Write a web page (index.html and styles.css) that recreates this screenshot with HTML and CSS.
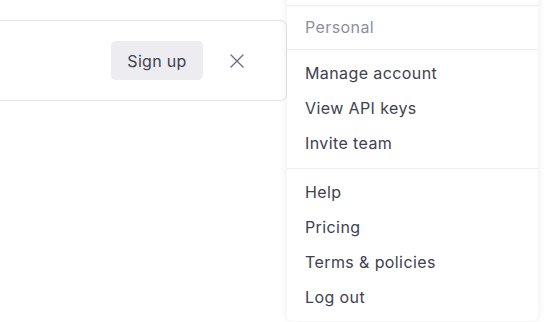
FILE: index.html
```html
<!DOCTYPE html>
<html>
<head>
    <title>Account menu</title>
    <link rel="stylesheet" href="styles.css">
</head>
<body>
    <div class="page">
        <div class="banner">
            <button class="signup-btn">Sign up</button>
            <button class="close-btn" aria-label="Close">
                <svg width="16" height="16" viewBox="0 0 16 16" fill="none" stroke="currentColor" stroke-width="1.4" stroke-linecap="round">
                    <path d="M2 2L14 14M14 2L2 14"/>
                </svg>
            </button>
        </div>

        <div class="menu">
            <div class="menu-section menu-top"></div>
            <div class="menu-section menu-label">Personal</div>
            <div class="menu-section menu-account">
                <a href="#" class="menu-item">Manage account</a>
                <a href="#" class="menu-item">View API keys</a>
                <a href="#" class="menu-item">Invite team</a>
            </div>
            <div class="menu-section">
                <a href="#" class="menu-item">Help</a>
                <a href="#" class="menu-item">Pricing</a>
                <a href="#" class="menu-item">Terms &amp; policies</a>
                <a href="#" class="menu-item">Log out</a>
            </div>
        </div>
    </div>
</body>
</html>
```

FILE: styles.css
```css
body {
    margin: 0;
    padding: 0;
    background-color: #fff;
    font-family: Inter, "Noto Sans", sans-serif;
    color: #40414f;
    overflow: hidden;
}
.page {
    display: flex;
    align-items: flex-start;
    height: 322px;
}
.banner {
    margin-top: 20px;
    margin-left: -20px;
    width: 305px;
    height: 79px;
    border: 1px solid #e5e5e5;
    border-radius: 6px;
    display: flex;
    align-items: center;
    justify-content: flex-end;
    flex-shrink: 0;
}
.signup-btn {
    background-color: #ececf1;
    border: none;
    border-radius: 5px;
    height: 39px;
    width: 92px;
    font-family: inherit;
    font-size: 16px;
    letter-spacing: 0.3px;
    color: #40414f;
    cursor: pointer;
    margin-right: 26px;
}
.close-btn {
    background: none;
    border: none;
    padding: 0;
    width: 16px;
    height: 16px;
    color: #6e6e80;
    margin-right: 41px;
    cursor: pointer;
}
.menu {
    width: 251px;
    margin-top: -40px;
    background-color: #fff;
    border-radius: 0 0 6px 6px;
    box-shadow: 0 0 10px rgba(0,0,0,0.08);
    flex-shrink: 0;
}
.menu-section {
    border-top: 1px solid #ececf1;
    padding: 6px 0;
}
.menu-top {
    border-top: none;
    height: 33px;
}
.menu-label {
    height: 31px;
    line-height: 31px;
    padding-left: 18px;
    color: #8e8ea0;
    font-size: 16px;
    letter-spacing: 0.4px;
}
.menu-account {
    padding-bottom: 7px;
}
.menu-item {
    display: block;
    height: 35px;
    line-height: 35px;
    padding-left: 18px;
    font-size: 16px;
    letter-spacing: 0.4px;
    color: #40414f;
    text-decoration: none;
}
.menu-item:hover {
    background-color: #f7f7f8;
}
```
